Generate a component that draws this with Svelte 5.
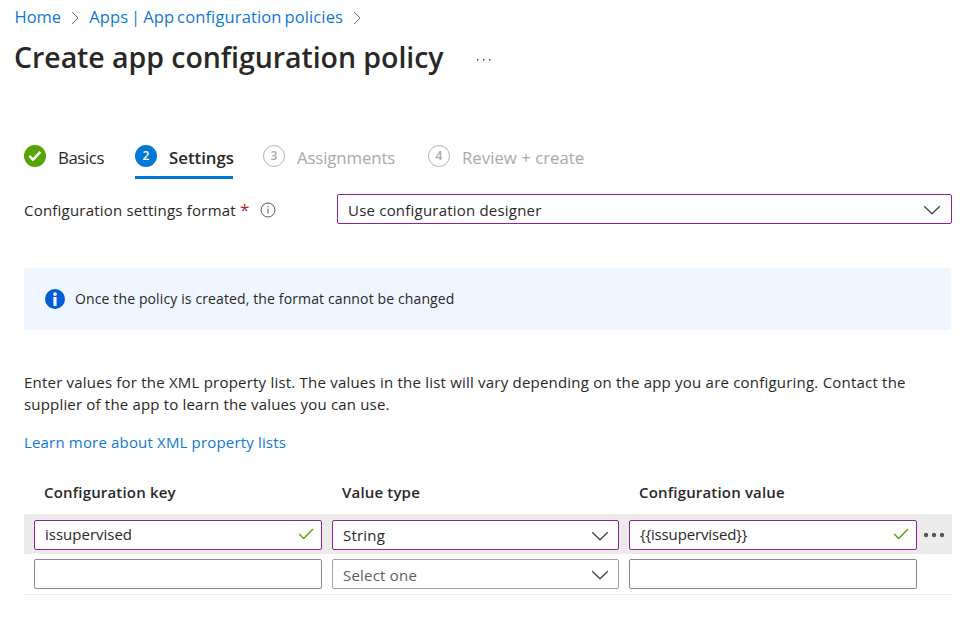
<script>
  const steps = [
    { n: 1, label: 'Basics', state: 'done' },
    { n: 2, label: 'Settings', state: 'current' },
    { n: 3, label: 'Assignments', state: 'todo' },
    { n: 4, label: 'Review + create', state: 'todo' }
  ];
  const rows = [
    { key: 'issupervised', type: 'String', value: '{{issupervised}}', filled: true },
    { key: '', type: 'Select one', value: '', filled: false }
  ];
</script>

{#snippet chevronRight()}
  <svg class="crumb-sep" width="9" height="14" viewBox="0 0 9 14"><path d="M1.2 1 L7 7 L1.2 13" /></svg>
{/snippet}
{#snippet chevronDown()}
  <svg class="chev" width="18" height="10" viewBox="0 0 18 10"><path d="M1.2 1.2 L9 8.8 L16.8 1.2" /></svg>
{/snippet}
{#snippet check()}
  <svg class="check" width="16" height="12" viewBox="0 0 16 12"><path d="M1.2 6 L5.7 10.4 L15 1" /></svg>
{/snippet}

<div class="page">
  <nav class="crumbs">
    <a>Home</a>{@render chevronRight()}<a class="policies">Apps | App configuration policies</a>{@render chevronRight()}
  </nav>
  <header>
    <h1>Create app configuration policy</h1>
    <svg width="16" height="4" viewBox="0 0 16 4" fill="#333"><rect x="1" y="1" width="1.4" height="1.4" /><rect x="7" y="1" width="1.4" height="1.4" /><rect x="13" y="1" width="1.4" height="1.4" /></svg>
  </header>
  <main>
    <ol class="steps">
      {#each steps as s}
        <li class="{s.state} s{s.n}">
          <span class="dot">
            {#if s.state === 'done'}
              <svg width="14" height="12" viewBox="0 0 14 12"><path d="M1.4 5.8 L5 9.6 L12.4 1.8" fill="none" stroke="#fff" stroke-width="2.5" /></svg>
            {:else}{s.n}{/if}
          </span>
          <span class="label">{s.label}</span>
        </li>
      {/each}
    </ol>
    <div class="format">
      <span class="name">Configuration settings format</span><span class="star">*</span>
      <svg class="info" width="16" height="16" viewBox="0 0 16 16"><circle cx="8" cy="8" r="7" fill="none" stroke="#555" /><path d="M8 6.6V11.6M8 4.2V5.4" stroke="#555" /></svg>
      <div class="field select filled"><span>Use configuration designer</span>{@render chevronDown()}</div>
    </div>
    <div class="banner">
      <svg width="20" height="20" viewBox="0 0 20 20"><circle cx="10" cy="10" r="10" fill="#015cda" /><circle cx="10" cy="5.1" r="1.9" fill="#fff" /><path d="M10 8V17" stroke="#fff" stroke-width="3.2" /></svg>
      <span>Once the policy is created, the format cannot be changed</span>
    </div>
    <p>Enter values for the XML property list. The values in the list will vary depending on the app you are configuring. Contact the<br /><span class="second">supplier of the app to learn the values you can use.</span></p>
    <a class="learn">Learn more about XML property lists</a>
    <div class="row head">
      <b>Configuration key</b><b>Value type</b><b>Configuration value</b>
    </div>
    {#each rows as r}
      <div class="row" class:active={r.filled}>
        <div class="field key" class:filled={r.filled}><span>{r.key}</span>{#if r.filled}{@render check()}{/if}</div>
        <div class="field select" class:filled={r.filled} class:placeholder={!r.filled}><span>{r.type}</span>{@render chevronDown()}</div>
        <div class="field value" class:filled={r.filled}><span>{r.value}</span>{#if r.filled}{@render check()}{/if}</div>
        {#if r.filled}<svg class="more" width="22" height="6" viewBox="0 0 22 6" fill="#555"><circle cx="3" cy="3" r="2.2" /><circle cx="11" cy="3" r="2.2" /><circle cx="19" cy="3" r="2.2" /></svg>{/if}
      </div>
    {/each}
  </main>
</div>

<style>
  .page { width: 970px; height: 620px; overflow: hidden; background: #fff; color: #292827; font: 15px/22px 'Open Sans', 'Noto Sans', sans-serif; box-sizing: border-box; }
  span, a, b, h1, p { white-space: nowrap; }
  svg { flex: none; }
  .crumbs { display: flex; align-items: center; height: 34px; padding-left: 14.5px; font-size: 16.5px; }
  a { color: #0f78d4; }
  .policies { word-spacing: -1.5px; letter-spacing: 0.13px; }
  .crumb-sep { margin: 1px 9px 0 10px; }
  .crumb-sep path { fill: none; stroke: #666; }
  header { display: flex; align-items: center; height: 46px; padding-left: 14px; }
  h1 { margin: 0; font-size: 28.5px; line-height: 40px; font-weight: 600; letter-spacing: -0.05px; }
  header svg { margin: 5px 0 0 32px; }
  main { display: flex; flex-direction: column; padding: 62px 18px 0 24px; }
  .steps { display: flex; list-style: none; margin: 0; padding: 0; height: 37px; }
  li { display: flex; height: 34px; font-size: 16.8px; }
  .dot { display: flex; flex: none; align-items: center; justify-content: center; box-sizing: border-box; width: 22px; height: 22px; margin-top: 3px; border-radius: 50%; font-size: 12px; font-weight: 600; letter-spacing: 0; }
  .label { margin: 5px 0 0 12px; }
  .done .dot { background: #57a300; }
  .current { border-bottom: 3px solid #0078d4; }
  .current .dot { background: #0078d4; color: #fff; }
  .current .label { font-weight: 600; }
  .todo { color: #a9a9a9; }
  .todo .dot { border: 1.5px solid #b5b5b5; }
  .s1 { width: 111px; letter-spacing: -0.4px; }
  .s2 { width: 98px; margin-right: 30px; }
  .s3 { width: 165px; letter-spacing: -0.12px; }
  .format { display: flex; align-items: center; height: 30px; margin-top: 15px; }
  .format .name, .format .star { padding-top: 2px; }
  .name, .select { letter-spacing: 0.21px; }
  .star { color: #a4262c; margin-left: 4px; font-size: 17px; }
  .info { margin: 2px 0 0 11px; }
  .field { display: flex; align-items: center; justify-content: space-between; box-sizing: border-box; height: 30px; border: 1px solid #8a8886; border-radius: 2px; background: #fff; padding: 0 7px 0 10px; }
  .select { padding-right: 10px; }
  .select span { padding-top: 2px; }
  .filled { border-color: #8a22a2; }
  .placeholder { color: #605e5c; border-color: #a19f9d; }
  .format .field { margin-left: auto; width: 615px; }
  .chev path { fill: none; stroke: #444; stroke-width: 1.3; }
  .format .chev { margin-top: 1px; }
  .row .chev { margin: 2px -1px 0 0; }
  .check path { fill: none; stroke: #57a300; stroke-width: 1.4; }
  .value { letter-spacing: -0.15px; }
  .banner { display: flex; align-items: center; height: 62px; margin: 44px 1px 0 0; padding-left: 21px; gap: 10px; border-radius: 3px; background: #eff6ff; box-sizing: border-box; font-size: 14px; letter-spacing: 0.125px; }
  p { margin: 41px 0 0; letter-spacing: 0.21px; }
  .second { letter-spacing: 0.18px; }
  .learn { margin-top: 16px; align-self: flex-start; letter-spacing: 0.17px; }
  .row { display: grid; grid-template-columns: 288px 287px 288px 22px; column-gap: 10px; align-items: center; height: 41px; padding-left: 10px; border-bottom: 1px solid #edebe9; box-sizing: border-box; }
  .head { border: 0; margin-top: 18px; height: 43px; padding-bottom: 2px; }
  .head b { padding-left: 10px; font-weight: 600; letter-spacing: 0.17px; }
  .active { background: #edebe9; border: 0; height: 40px; padding-top: 2px; }
  .active .key, .active .value { padding-bottom: 2px; }
  .active .select span { padding-top: 0; }
  .more { margin: -1px 0 0 -4px; }
</style>
